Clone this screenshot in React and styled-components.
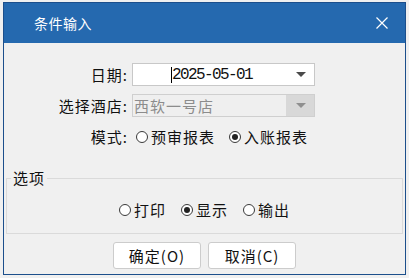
import styled, { createGlobalStyle } from "styled-components";

const GlobalStyle = createGlobalStyle`
  html, body {
    margin: 0;
    padding: 0;
    background: #f0f0f0;
  }
  body {
    font-family: "Noto Sans CJK SC", "Microsoft YaHei", sans-serif;
    color: #111;
  }
`;

const Page = styled.div`
  padding: 2px 0 0 3px;
`;

const Window = styled.div`
  width: 401px;
  height: 271px;
  border: 1px solid #1c4f8c;
  background: #f0f0f0;
  display: flex;
  flex-direction: column;
`;

const TitleBar = styled.div`
  height: 40px;
  background: #2569af;
  color: #fff;
  display: flex;
  align-items: center;
  justify-content: space-between;
  padding: 0 17px 0 30px;
  font-size: 14px;
  letter-spacing: 0.5px;
`;

const CloseButton = styled.span`
  display: flex;
  align-items: center;
`;

const Body = styled.div`
  flex: 1;
  display: flex;
  flex-direction: column;
  padding: 20px 2px 0 2px;
`;

const FormGrid = styled.div`
  display: grid;
  grid-template-columns: 122px 183px;
  column-gap: 4px;
  row-gap: 8px;
  align-items: center;
`;

const Label = styled.label`
  text-align: right;
  font-size: 15px;
  letter-spacing: 1px;
  line-height: 23px;
`;

const Combo = styled.div`
  height: 23px;
  box-sizing: border-box;
  border: 1px solid ${(p) => (p.disabled ? "#cfcfcf" : "#c8c8c8")};
  background: ${(p) => (p.disabled ? "#efefef" : "#fff")};
  display: flex;
  align-items: center;
`;

const ComboText = styled.div`
  flex: 1;
  display: flex;
  align-items: center;
  padding-left: ${(p) => p.indent}px;
  font-size: 15px;
  letter-spacing: 1px;
  color: ${(p) => (p.disabled ? "#8c8c8c" : "#111")};
`;

const DateText = styled.span`
  font-family: "Liberation Mono", monospace;
  font-size: 16px;
  letter-spacing: -1.6px;
  color: #111;
`;

const Caret = styled.span`
  width: 1px;
  height: 16px;
  background: #000;
`;

const DropButton = styled.div`
  width: 28px;
  align-self: stretch;
  display: flex;
  align-items: center;
  justify-content: center;
  background: ${(p) => (p.disabled ? "#d8d8d8" : "transparent")};
`;

const Arrow = styled.span`
  width: 0;
  height: 0;
  border-left: 5px solid transparent;
  border-right: 5px solid transparent;
  border-top: 5px solid ${(p) => (p.disabled ? "#8f8f8f" : "#4a4a4a")};
  margin-left: 2px;
`;

const RadioRow = styled.div`
  display: flex;
  align-items: center;
  gap: ${(p) => p.gap}px;
  padding-left: ${(p) => p.indent || 0}px;
  justify-content: ${(p) => (p.center ? "center" : "flex-start")};
  height: 23px;
  margin-top: ${(p) => p.top || 0}px;
`;

const Radio = styled.span`
  display: flex;
  align-items: center;
  gap: 3px;
  font-size: 15px;
  letter-spacing: 1px;
`;

const Circle = styled.span`
  width: 10px;
  height: 10px;
  border: 1px solid #3a3a3a;
  border-radius: 50%;
  background: #fff;
  display: flex;
  align-items: center;
  justify-content: center;
  &::after {
    content: "";
    width: 6px;
    height: 6px;
    border-radius: 50%;
    background: ${(p) => (p.checked ? "#222" : "transparent")};
  }
`;

const Group = styled.fieldset`
  margin: 20px 0 0 0;
  padding: 0 0 12px 0;
  border: 1px solid #dadada;
  min-width: 0;
`;

const Legend = styled.legend`
  margin-left: 4px;
  padding: 0 2px;
  font-size: 15px;
  letter-spacing: 1px;
  line-height: 20px;
`;

const Buttons = styled.div`
  display: flex;
  justify-content: center;
  gap: 7px;
  margin-top: 8px;
`;

const Button = styled.button`
  width: 88px;
  height: 27px;
  box-sizing: border-box;
  border: 1px solid #cccccc;
  border-radius: 3px;
  background: #fff;
  font-family: "Noto Sans CJK SC", sans-serif;
  font-size: 15px;
  letter-spacing: 1px;
  color: #111;
  padding: 0;
  display: flex;
  align-items: center;
  justify-content: center;
`;

const RadioItem = ({ checked, children }) => (
  <Radio>
    <Circle checked={checked} />
    {children}
  </Radio>
);

export default function App() {
  return (
    <Page>
      <GlobalStyle />
      <Window>
        <TitleBar>
          <span>条件输入</span>
          <CloseButton>
            <svg width="12" height="12" viewBox="0 0 12 12">
              <path d="M0.5 0.5 L11.5 11.5 M11.5 0.5 L0.5 11.5" stroke="#fff" strokeWidth="1.2" />
            </svg>
          </CloseButton>
        </TitleBar>
        <Body>
          <FormGrid>
            <Label>日期:</Label>
            <Combo>
              <ComboText indent={38}>
                <Caret />
                <DateText>2025-05-01</DateText>
              </ComboText>
              <DropButton>
                <Arrow />
              </DropButton>
            </Combo>
            <Label>选择酒店:</Label>
            <Combo disabled>
              <ComboText indent={1} disabled>西软一号店</ComboText>
              <DropButton disabled>
                <Arrow disabled />
              </DropButton>
            </Combo>
            <Label>模式:</Label>
            <RadioRow gap={14} indent={4}>
              <RadioItem>预审报表</RadioItem>
              <RadioItem checked>入账报表</RadioItem>
            </RadioRow>
          </FormGrid>
          <Group>
            <Legend>选项</Legend>
            <RadioRow gap={15} center top={10}>
              <RadioItem>打印</RadioItem>
              <RadioItem checked>显示</RadioItem>
              <RadioItem>输出</RadioItem>
            </RadioRow>
          </Group>
          <Buttons>
            <Button>确定(O)</Button>
            <Button>取消(C)</Button>
          </Buttons>
        </Body>
      </Window>
    </Page>
  );
}
